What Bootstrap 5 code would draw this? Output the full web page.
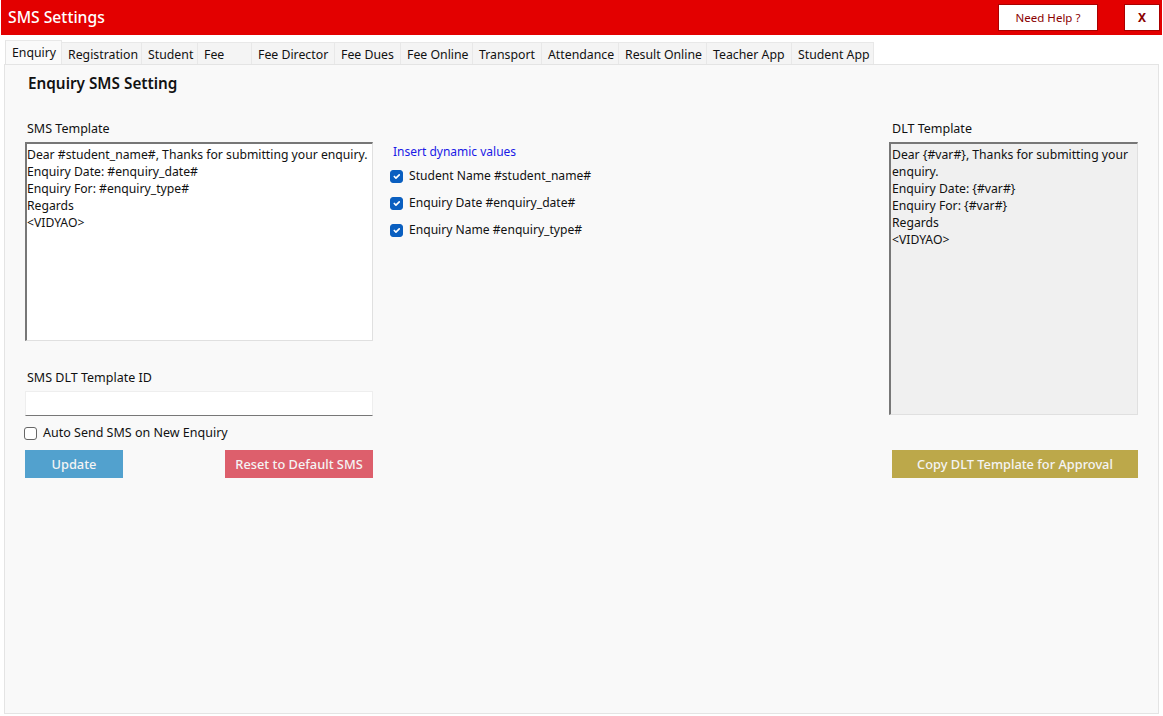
<!DOCTYPE html>
<html lang="en">

<head>
    <meta charset="UTF-8">
    <meta name="viewport" content="width=device-width, initial-scale=1">
    <title>SMS Settings</title>
    <link href="https://cdn.jsdelivr.net/npm/bootstrap@5.3.3/dist/css/bootstrap.min.css" rel="stylesheet">
    <style>
        html, body { height: 100%; }
        body { font-family: "Noto Sans", "Open Sans", sans-serif; font-size: 13px; color: #111; background: #fff; overflow: hidden; }
        .app-head { height: 35px; margin-left: 1px; margin-right: 1px; background: #e30000; padding: 0 2px 0 7px; }
        .app-title { font-size: 15.7px; font-weight: 500; color: #fff; }
        .help-btn { width: 100px; height: 27px; margin-right: 26px; padding: 0; border: 1px solid #a00; border-radius: 0; background: #fff; color: #8a0000; font-size: 11.5px; }
        .close-btn { width: 36px; height: 27px; padding: 0; border: 1px solid #a00; border-radius: 0; background: #fff; color: #8a0000; font-size: 12px; font-weight: 700; }
        .tab-strip { height: 29px; padding: 5px 0 0 5px; border-bottom: 0; }
        .tab-strip .nav-link { height: 24px; margin: 0; padding: 0 0 0 6px; margin-top: 2px; border: 1px solid #e8e8e8; border-bottom: 0; border-left: 0; border-radius: 0; background: #f4f4f4; color: #111; font-size: 12.3px; line-height: 23px; text-align: left; white-space: nowrap; }
        .tab-strip .nav-link.active { height: 25px; margin-top: 0; padding-top: 0; background: #fafafa; border-left: 1px solid #e4e4e4; color: #111; }
        .tab-body { position: relative; height: 650px; margin: 0 4px 0 4px; padding: 0 20px 0 20px; background: #f9f9f9; border: 1px solid #e4e4e4; }
        .set-title { margin: 0 0 0 3px; padding-top: 8px; height: 55px; font-size: 15.3px; font-weight: 600; line-height: 21px; }
        .cap { display: block; margin: 0 0 4px 2px; height: 18px; line-height: 18px; font-size: 12.5px; }
        .left-col { width: 348px; }
        .mid-col { width: 516px; padding: 23px 0 0 17px; }
        .right-col { width: 249px; }
        .right-col .cap { margin-left: 3px; }
        .tpl-box { display: block; width: 100%; padding: 2px 0; border: 1px solid #e0e0e0; border-top: 2px solid #777; border-left: 2px solid #777; border-radius: 0; font-size: 12.2px; line-height: 17px; color: #111; resize: none; outline: 0; overflow: hidden; font-family: inherit; }
        .tpl-main { height: 199px; background: #fff; }
        .tpl-dlt { height: 273px; padding-left: 1px; background: #f0f0f0; }
        .id-cap { margin-top: 28px; margin-bottom: 4px; }
        .id-input { display: block; width: 100%; height: 25px; padding: 0 3px; border: 1px solid #eee; border-bottom: 1px solid #777; border-radius: 0; background: #fff; outline: 0; }
        .dyn-title { margin: 0 0 2px 3px; height: 18px; line-height: 18px; color: #1a1ae6; font-size: 12px; }
        .tick-row { min-height: 0; height: 27px; margin: 0; padding: 0; display: flex; align-items: center; }
        .tick-row .form-check-input { float: none; width: 13px; height: 13px; margin: 0 6px 0 0; border-radius: 3px; border-color: #666; }
        .tick-row .form-check-input:checked { background-color: #0a5fc0; border-color: #0a5fc0; }
        .tick-row .form-check-label { font-size: 12.1px; }
        .auto-row { height: 17px; margin: 9px 0 8px -1px; }
        .auto-row .form-check-label { font-size: 12.5px; }
        .flat-btn { height: 28px; padding: 1px 0 0; border: 0; border-radius: 0; color: #f4f4f4; font-size: 12.8px; font-weight: 500; }
        .btn-update { width: 98px; background: #52a1ce; }
        .btn-reset { width: 148px; background: #dd5f6c; }
        .btn-copy { width: 246px; margin: 35px 0 0 3px; background: #bca84a; }
    </style>
</head>

<body>
    <header class="app-head d-flex align-items-center">
        <span class="app-title me-auto">SMS Settings</span>
        <button type="button" class="btn help-btn">Need Help ?</button>
        <button type="button" class="btn close-btn">X</button>
    </header>

    <ul class="nav tab-strip">
        <li class="nav-item"><a class="nav-link active" href="#">Enquiry</a></li>
        <li class="nav-item"><a class="nav-link" href="#">Registration</a></li>
        <li class="nav-item"><a class="nav-link" href="#">Student</a></li>
        <li class="nav-item"><a class="nav-link" href="#">Fee</a></li>
        <li class="nav-item"><a class="nav-link" href="#">Fee Director</a></li>
        <li class="nav-item"><a class="nav-link" href="#">Fee Dues</a></li>
        <li class="nav-item"><a class="nav-link" href="#">Fee Online</a></li>
        <li class="nav-item"><a class="nav-link" href="#">Transport</a></li>
        <li class="nav-item"><a class="nav-link" href="#">Attendance</a></li>
        <li class="nav-item"><a class="nav-link" href="#">Result Online</a></li>
        <li class="nav-item"><a class="nav-link" href="#">Teacher App</a></li>
        <li class="nav-item"><a class="nav-link" href="#">Student App</a></li>
    </ul>

    <main class="tab-body">
        <h2 class="set-title">Enquiry SMS Setting</h2>
        <div class="d-flex">
            <div class="left-col">
                <label class="cap" for="smsTemplate">SMS Template</label>
                <textarea class="tpl-box tpl-main" id="smsTemplate">Dear #student_name#, Thanks for submitting your enquiry.
Enquiry Date: #enquiry_date#
Enquiry For: #enquiry_type#
Regards
&lt;VIDYAO&gt;</textarea>
                <label class="cap id-cap" for="dltId">SMS DLT Template ID</label>
                <input type="text" class="id-input" id="dltId">
                <div class="form-check tick-row auto-row">
                    <input class="form-check-input" type="checkbox" id="autoSend">
                    <label class="form-check-label" for="autoSend">Auto Send SMS on New Enquiry</label>
                </div>
                <div class="d-flex justify-content-between">
                    <button type="button" class="btn flat-btn btn-update">Update</button>
                    <button type="button" class="btn flat-btn btn-reset">Reset to Default SMS</button>
                </div>
            </div>
            <div class="mid-col">
                <div class="dyn-title">Insert dynamic values</div>
                <div class="form-check tick-row">
                    <input class="form-check-input" type="checkbox" id="tickName" checked>
                    <label class="form-check-label" for="tickName">Student Name #student_name#</label>
                </div>
                <div class="form-check tick-row">
                    <input class="form-check-input" type="checkbox" id="tickDate" checked>
                    <label class="form-check-label" for="tickDate">Enquiry Date #enquiry_date#</label>
                </div>
                <div class="form-check tick-row">
                    <input class="form-check-input" type="checkbox" id="tickType" checked>
                    <label class="form-check-label" for="tickType">Enquiry Name #enquiry_type#</label>
                </div>
            </div>
            <div class="right-col">
                <label class="cap" for="dltTemplate">DLT Template</label>
                <textarea class="tpl-box tpl-dlt" id="dltTemplate" readonly>Dear {#var#}, Thanks for submitting your enquiry.
Enquiry Date: {#var#}
Enquiry For: {#var#}
Regards
&lt;VIDYAO&gt;</textarea>
                <button type="button" class="btn flat-btn btn-copy">Copy DLT Template for Approval</button>
            </div>
        </div>
    </main>

    <script>
        // tab widths follow the strip in the screen, Fee has extra room
        const tabWidths = [57, 80, 56, 54, 83, 66, 72, 69, 77, 88, 85, 82];
        document.querySelectorAll('.tab-strip .nav-link').forEach((link, i) => {
            link.style.width = tabWidths[i] + 'px';
        });
    </script>
    <script src="https://cdn.jsdelivr.net/npm/bootstrap@5.3.3/dist/js/bootstrap.bundle.min.js"></script>
</body>

</html>
